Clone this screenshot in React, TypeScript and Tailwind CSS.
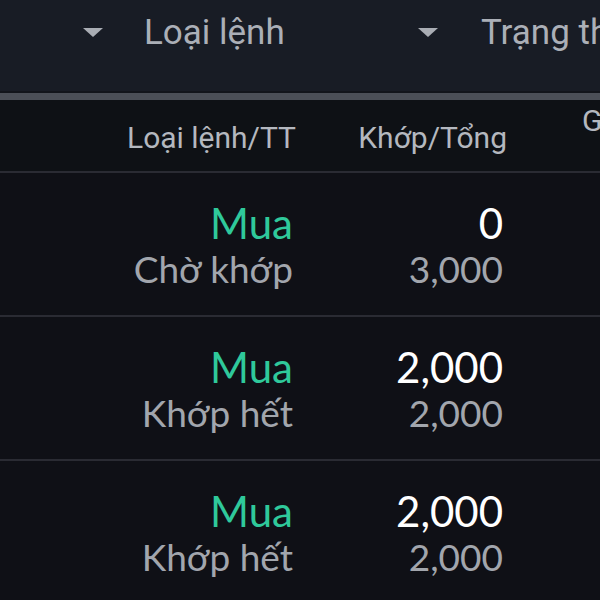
import React from "react";

const rows = [
  { side: "Mua", status: "Chờ khớp", matched: "0", total: "3,000" },
  { side: "Mua", status: "Khớp hết", matched: "2,000", total: "2,000" },
  { side: "Mua", status: "Khớp hết", matched: "2,000", total: "2,000" },
];

function Tri() {
  return (
    <svg width="20" height="10" viewBox="0 0 20 10" className="shrink-0">
      <path d="M0 0 L20 0 L10 9 Z" fill="#a9adb4" />
    </svg>
  );
}

export default function App() {
  return (
    <div className="w-[600px] h-[600px] overflow-hidden bg-[#0f1016] relative">
      {/* filter bar */}
      <div className="h-[91px] bg-[#181c25] flex items-start pt-[13px] text-[#abafb7] text-[35px]" style={{ fontFamily: "Roboto, sans-serif" }}>
        <div className="w-[418px] shrink-0 flex items-center pl-[83px] h-[38px]">
          <div className="mt-[2px]"><Tri /></div>
          <span className="ml-[41px] leading-none whitespace-nowrap">Loại lệnh</span>
        </div>
        <div className="shrink-0 flex items-center h-[38px]">
          <div className="mt-[2px]"><Tri /></div>
          <span className="ml-[43px] leading-none whitespace-nowrap">Trạng thái</span>
        </div>
      </div>
      <div className="h-[2px] bg-[#12151b]" />
      <div className="h-[7px] bg-[#4b4f57]" />
      {/* header */}
      <div className="h-[71px] bg-[#0e1115] flex text-[#b4b8bf] text-[30px] relative" style={{ fontFamily: "Roboto, sans-serif" }}>
        <div className="w-[296px] shrink-0 flex items-center justify-end pt-[3px] whitespace-nowrap">Loại lệnh/TT</div>
        <div className="w-[211px] shrink-0 flex items-center justify-end pt-[3px] whitespace-nowrap">Khớp/Tổng</div>
        <div className="ml-[75px] pt-[6px] leading-none whitespace-nowrap">Giá</div>
      </div>
      <div className="h-[2px] bg-[#2a2b33]" />
      {rows.map((r, i) => (
        <div key={i}>
          <div className="h-[142px] flex" style={{ fontFamily: "Lato, sans-serif" }}>
            <div className="w-[293px] shrink-0 flex flex-col items-end justify-center">
              <div className="text-[42px] leading-[45px] text-[#2fc99b] mt-[3px]">{r.side}</div>
              <div className="text-[37px] leading-[45px] text-[#a2a6ad]">{r.status}</div>
            </div>
            <div className="w-[210px] shrink-0 flex flex-col items-end justify-center">
              <div className="text-[42px] leading-[45px] text-white mt-[3px]">{r.matched}</div>
              <div className="text-[37px] leading-[45px] text-[#a2a6ad]">{r.total}</div>
            </div>
          </div>
          <div className="h-[2px] bg-[#2a2b33]" />
        </div>
      ))}
    </div>
  );
}
